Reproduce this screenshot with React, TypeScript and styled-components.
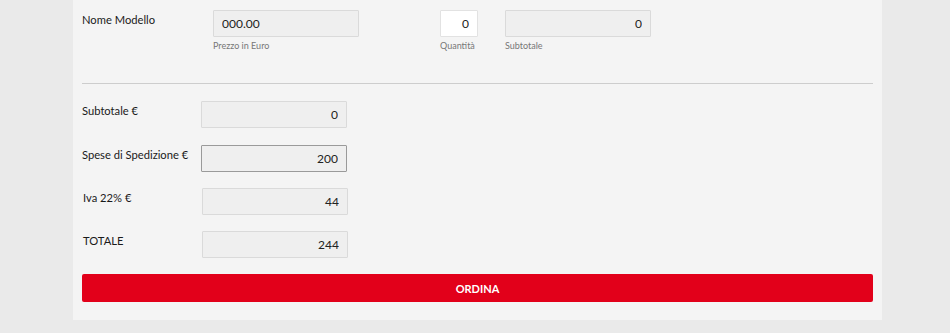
import React, { useState } from 'react';
import styled, { createGlobalStyle } from 'styled-components';

const GlobalStyle = createGlobalStyle`
    body {
        margin: 0;
        background-color: #eaeaea;
        font-family: 'Lato', 'Liberation Sans', sans-serif;
    }
`;

const Panel = styled.div`
    width: 791px;
    margin-left: 73px;
    padding: 10px 9px 18px;
    background-color: #f4f4f4;
`;

const ProductRow = styled.div`
    display: flex;
    align-items: flex-start;
    height: 57px;
`;

const Label = styled.label<{ $width: number }>`
    width: ${(p) => p.$width}px;
    flex-shrink: 0;
    padding-top: 3px;
    font-size: 11.2px;
    line-height: 14px;
    color: #1a1a1a;
`;

const Field = styled.div<{ $gap?: number }>`
    display: flex;
    flex-direction: column;
    margin-left: ${(p) => p.$gap || 0}px;
`;

const Input = styled.input<{ $width?: number; $white?: boolean; $align?: 'left' | 'right'; $active?: boolean }>`
    box-sizing: border-box;
    width: ${(p) => p.$width || 146}px;
    height: 27px;
    padding: 0 8px;
    font-family: 'Lato', 'Liberation Sans', sans-serif;
    font-size: 12px;
    color: #222;
    text-align: ${(p) => p.$align || 'right'};
    background-color: ${(p) => (p.$white ? '#fff' : '#efefef')};
    border: 1px solid ${(p) => (p.$active ? '#9a9a9a' : p.$white ? '#e2e2e2' : '#dadada')};
    border-radius: 1px;
    outline: none;

    &:focus {
        border-color: #9a9a9a;
    }
`;

const Hint = styled.span`
    margin-top: 3px;
    font-size: 9px;
    line-height: 11px;
    color: #777;
`;

const Divider = styled.hr`
    margin: 16px 0 17px;
    border: none;
    border-top: 1px solid #cdcdcd;
`;

const SummaryRow = styled.div<{ $shift?: boolean; $space: number }>`
    display: flex;
    align-items: flex-start;
    margin-left: ${(p) => (p.$shift ? 1 : 0)}px;
    margin-bottom: ${(p) => p.$space}px;
`;

const OrderButton = styled.button`
    display: block;
    width: 100%;
    height: 28px;
    font-family: 'Lato', 'Liberation Sans', sans-serif;
    font-size: 11px;
    font-weight: 700;
    color: #fff;
    background-color: #e2001a;
    border: none;
    border-radius: 2px;
    cursor: pointer;
`;

const summary = [
    { label: 'Subtotale €', value: '0', space: 17 },
    { label: 'Spese di Spedizione €', value: '200', active: true, space: 16 },
    { label: 'Iva 22% €', value: '44', shift: true, space: 16 },
    { label: 'TOTALE', value: '244', shift: true, space: 16 },
];

function App() {
    const [quantity, setQuantity] = useState('0');

    return (
        <>
            <GlobalStyle />
            <Panel>
                <ProductRow>
                    <Label $width={131}>Nome Modello</Label>
                    <Field>
                        <Input $align="left" readOnly value="000.00" />
                        <Hint>Prezzo in Euro</Hint>
                    </Field>
                    <Field $gap={81}>
                        <Input
                            $width={38}
                            $white
                            value={quantity}
                            onChange={(e) => setQuantity(e.target.value)}
                        />
                        <Hint>Quantità</Hint>
                    </Field>
                    <Field $gap={27}>
                        <Input readOnly value="0" />
                        <Hint>Subtotale</Hint>
                    </Field>
                </ProductRow>

                <Divider />

                {summary.map((row) => (
                    <SummaryRow key={row.label} $shift={row.shift} $space={row.space}>
                        <Label $width={119}>{row.label}</Label>
                        <Input readOnly value={row.value} $active={row.active} />
                    </SummaryRow>
                ))}

                <OrderButton>ORDINA</OrderButton>
            </Panel>
        </>
    );
}

export default App;
